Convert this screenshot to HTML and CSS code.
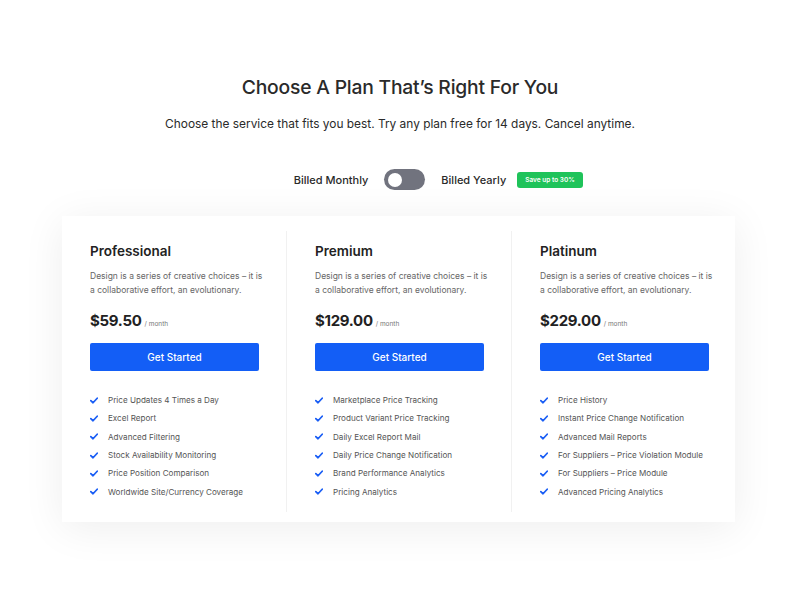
FILE: index.html
```html
<!DOCTYPE html>
<html>
<head>
<meta charset="utf-8">
<link rel="stylesheet" href="styles.css">
</head>
<body>
<div class="page">
  <h1 class="title">Choose A Plan That’s Right For You</h1>
  <p class="subtitle">Choose the service that fits you best. Try any plan free for 14 days. Cancel anytime.</p>
  <div class="billing">
    <span class="bill-label">Billed Monthly</span>
    <span class="switch"><span class="knob"></span></span>
    <span class="bill-label yearly">Billed Yearly<span class="badge">Save up to 30%</span></span>
  </div>
  <div class="card">
    <div class="plan">
      <h2 class="plan-name">Professional</h2>
      <p class="plan-desc">Design is a series of creative choices – it is a collaborative effort, an evolutionary.</p>
      <div class="price"><span class="amount">$59.50</span><span class="per">/ month</span></div>
      <button class="cta">Get Started</button>
      <ul class="features">
        <li><svg class="check" viewBox="0 0 10 8"><path d="M1 4.2 L3.8 6.8 L9 1.2" /></svg>Price Updates 4 Times a Day</li>
        <li><svg class="check" viewBox="0 0 10 8"><path d="M1 4.2 L3.8 6.8 L9 1.2" /></svg>Excel Report</li>
        <li><svg class="check" viewBox="0 0 10 8"><path d="M1 4.2 L3.8 6.8 L9 1.2" /></svg>Advanced Filtering</li>
        <li><svg class="check" viewBox="0 0 10 8"><path d="M1 4.2 L3.8 6.8 L9 1.2" /></svg>Stock Availability Monitoring</li>
        <li><svg class="check" viewBox="0 0 10 8"><path d="M1 4.2 L3.8 6.8 L9 1.2" /></svg>Price Position Comparison</li>
        <li><svg class="check" viewBox="0 0 10 8"><path d="M1 4.2 L3.8 6.8 L9 1.2" /></svg>Worldwide Site/Currency Coverage</li>
      </ul>
    </div>
    <div class="plan">
      <h2 class="plan-name">Premium</h2>
      <p class="plan-desc">Design is a series of creative choices – it is a collaborative effort, an evolutionary.</p>
      <div class="price"><span class="amount">$129.00</span><span class="per">/ month</span></div>
      <button class="cta">Get Started</button>
      <ul class="features">
        <li><svg class="check" viewBox="0 0 10 8"><path d="M1 4.2 L3.8 6.8 L9 1.2" /></svg>Marketplace Price Tracking</li>
        <li><svg class="check" viewBox="0 0 10 8"><path d="M1 4.2 L3.8 6.8 L9 1.2" /></svg>Product Variant Price Tracking</li>
        <li><svg class="check" viewBox="0 0 10 8"><path d="M1 4.2 L3.8 6.8 L9 1.2" /></svg>Daily Excel Report Mail</li>
        <li><svg class="check" viewBox="0 0 10 8"><path d="M1 4.2 L3.8 6.8 L9 1.2" /></svg>Daily Price Change Notification</li>
        <li><svg class="check" viewBox="0 0 10 8"><path d="M1 4.2 L3.8 6.8 L9 1.2" /></svg>Brand Performance Analytics</li>
        <li><svg class="check" viewBox="0 0 10 8"><path d="M1 4.2 L3.8 6.8 L9 1.2" /></svg>Pricing Analytics</li>
      </ul>
    </div>
    <div class="plan">
      <h2 class="plan-name">Platinum</h2>
      <p class="plan-desc">Design is a series of creative choices – it is a collaborative effort, an evolutionary.</p>
      <div class="price"><span class="amount">$229.00</span><span class="per">/ month</span></div>
      <button class="cta">Get Started</button>
      <ul class="features">
        <li><svg class="check" viewBox="0 0 10 8"><path d="M1 4.2 L3.8 6.8 L9 1.2" /></svg>Price History</li>
        <li><svg class="check" viewBox="0 0 10 8"><path d="M1 4.2 L3.8 6.8 L9 1.2" /></svg>Instant Price Change Notification</li>
        <li><svg class="check" viewBox="0 0 10 8"><path d="M1 4.2 L3.8 6.8 L9 1.2" /></svg>Advanced Mail Reports</li>
        <li><svg class="check" viewBox="0 0 10 8"><path d="M1 4.2 L3.8 6.8 L9 1.2" /></svg>For Suppliers – Price Violation Module</li>
        <li><svg class="check" viewBox="0 0 10 8"><path d="M1 4.2 L3.8 6.8 L9 1.2" /></svg>For Suppliers – Price Module</li>
        <li><svg class="check" viewBox="0 0 10 8"><path d="M1 4.2 L3.8 6.8 L9 1.2" /></svg>Advanced Pricing Analytics</li>
      </ul>
    </div>
  </div>
</div>
</body>
</html>
```
FILE: styles.css
```css
* { box-sizing: border-box; }
html, body { margin: 0; padding: 0; }
body {
  background: #ffffff;
  font-family: "Inter", "Liberation Sans", sans-serif;
  color: #222;
  width: 800px;
  height: 600px;
  overflow: hidden;
}
.page {
  padding-top: 74px;
  display: flex;
  flex-direction: column;
  align-items: center;
}
.title {
  margin: 0;
  font-size: 19.3px;
  line-height: 26px;
  font-weight: 500;
  color: #2a2a2a;
  letter-spacing: -0.2px;
}
.subtitle {
  margin: 14px 0 0;
  font-size: 11.9px;
  line-height: 20px;
  color: #2a2a2a;
}
.billing {
  margin-top: 35px;
  display: flex;
  align-items: center;
  height: 21px;
}
.bill-label {
  font-size: 11px;
  font-weight: 500;
  color: #2a2a2a;
}
.yearly {
  position: relative;
}
.switch {
  width: 41px;
  height: 21px;
  border-radius: 11px;
  background: #71737e;
  margin: 0 16px;
  display: flex;
  align-items: center;
  padding-left: 4px;
}
.knob {
  width: 14px;
  height: 14px;
  border-radius: 50%;
  background: #fff;
}
.badge {
  position: absolute;
  left: calc(100% + 11px);
  top: 50%;
  transform: translateY(-50%);
  white-space: nowrap;
  background: #1fc35a;
  color: #fff;
  font-size: 6.5px;
  font-weight: 600;
  border-radius: 3px;
  padding: 4px 8px;
  line-height: 8px;
}
.card {
  margin-top: 26px;
  align-self: flex-start;
  margin-left: 62px;
  width: 673px;
  background: #fff;
  box-shadow: 0 6px 40px rgba(0, 0, 0, 0.07);
  display: grid;
  grid-template-columns: 224px 225px 224px;
  padding: 15px 0 10px;
}
.plan {
  padding: 11px 27px 11px 28px;
}
.plan + .plan {
  border-left: 1px solid #f1f1f1;
}
.plan-name {
  margin: 0;
  font-size: 13.5px;
  line-height: 18px;
  font-weight: 600;
  color: #222;
}
.plan-desc {
  margin: 9px -6px 0 0;
  font-size: 8.5px;
  line-height: 14px;
  color: #666;
}
.price {
  margin-top: 14px;
  height: 20px;
  display: flex;
  align-items: baseline;
}
.amount {
  font-size: 15px;
  font-weight: 700;
  color: #222;
  letter-spacing: -0.3px;
}
.per {
  margin-left: 3px;
  font-size: 6.5px;
  color: #777;
}
.cta {
  display: block;
  margin-top: 12px;
  width: 169px;
  height: 28px;
  border: none;
  border-radius: 2px;
  background: #135ef6;
  color: #fff;
  font-family: inherit;
  font-size: 10px;
  font-weight: 500;
  padding: 0;
}
.features {
  list-style: none;
  margin: 20px 0 0;
  padding: 0;
}
.features li {
  display: flex;
  align-items: center;
  height: 18.3px;
  font-size: 8.1px;
  color: #555;
  white-space: nowrap;
}
.check {
  width: 8px;
  height: 7px;
  margin: 0 10px 0 0;
  fill: none;
  stroke: #1a5ef5;
  stroke-width: 2.2;
  stroke-linecap: round;
  stroke-linejoin: round;
}
```
